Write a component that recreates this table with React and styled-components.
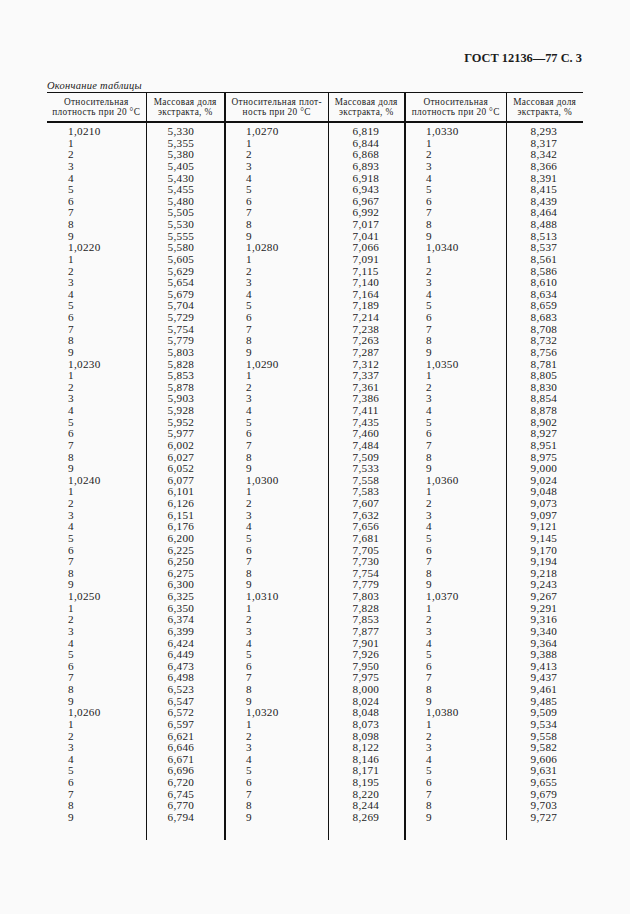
import React from 'react';
import styled, { createGlobalStyle } from 'styled-components';

const GlobalStyle = createGlobalStyle`
  html, body {
    margin: 0;
    padding: 0;
    background: #fafafa;
  }
  body {
    font-family: "Liberation Serif", "Times New Roman", serif;
    color: #1c1c1c;
  }
`;

const Page = styled.div`
  width: 630px;
  min-height: 914px;
  box-sizing: border-box;
  padding: 50px 47px 0 47px;
  background: #fafafa;
`;

const RunningTitle = styled.div`
  text-align: right;
  font-size: 12.4px;
  font-weight: 700;
  line-height: 16px;
  padding-right: 1px;
`;

const Caption = styled.div`
  margin-top: 13px;
  font-size: 10.5px;
  font-style: italic;
  line-height: 13px;
  letter-spacing: 0.25px;
`;

const Table = styled.table`
  width: 536px;
  border-collapse: collapse;
  table-layout: fixed;
`;

const HeadCell = styled.th`
  height: 28px;
  padding: 0;
  border-top: 1px solid #111;
  border-bottom: 2px solid #111;
  border-right: ${p => (p.$last ? 'none' : `${p.$thick ? 2 : 1}px solid #111`)};
  font-size: 9.3px;
  font-weight: 400;
  line-height: 10.5px;
  letter-spacing: 0.35px;
  text-align: center;
  vertical-align: middle;
`;

const BodyCell = styled.td`
  padding: 3px 0 16px ${p => p.$indent}px;
  border-right: ${p => (p.$last ? 'none' : `${p.$thick ? 2 : 1}px solid #111`)};
  vertical-align: top;
  font-size: 11.2px;
  letter-spacing: 0.3px;
`;

const Line = styled.div`
  height: 11.63px;
  line-height: 11.63px;
  white-space: nowrap;
`;

const col2 = [
  '5,330', '5,355', '5,380', '5,405', '5,430', '5,455', '5,480', '5,505', '5,530', '5,555',
  '5,580', '5,605', '5,629', '5,654', '5,679', '5,704', '5,729', '5,754', '5,779', '5,803',
  '5,828', '5,853', '5,878', '5,903', '5,928', '5,952', '5,977', '6,002', '6,027', '6,052',
  '6,077', '6,101', '6,126', '6,151', '6,176', '6,200', '6,225', '6,250', '6,275', '6,300',
  '6,325', '6,350', '6,374', '6,399', '6,424', '6,449', '6,473', '6,498', '6,523', '6,547',
  '6,572', '6,597', '6,621', '6,646', '6,671', '6,696', '6,720', '6,745', '6,770', '6,794',
];

const col4 = [
  '6,819', '6,844', '6,868', '6,893', '6,918', '6,943', '6,967', '6,992', '7,017', '7,041',
  '7,066', '7,091', '7,115', '7,140', '7,164', '7,189', '7,214', '7,238', '7,263', '7,287',
  '7,312', '7,337', '7,361', '7,386', '7,411', '7,435', '7,460', '7,484', '7,509', '7,533',
  '7,558', '7,583', '7,607', '7,632', '7,656', '7,681', '7,705', '7,730', '7,754', '7,779',
  '7,803', '7,828', '7,853', '7,877', '7,901', '7,926', '7,950', '7,975', '8,000', '8,024',
  '8,048', '8,073', '8,098', '8,122', '8,146', '8,171', '8,195', '8,220', '8,244', '8,269',
];

const col6 = [
  '8,293', '8,317', '8,342', '8,366', '8,391', '8,415', '8,439', '8,464', '8,488', '8,513',
  '8,537', '8,561', '8,586', '8,610', '8,634', '8,659', '8,683', '8,708', '8,732', '8,756',
  '8,781', '8,805', '8,830', '8,854', '8,878', '8,902', '8,927', '8,951', '8,975', '9,000',
  '9,024', '9,048', '9,073', '9,097', '9,121', '9,145', '9,170', '9,194', '9,218', '9,243',
  '9,267', '9,291', '9,316', '9,340', '9,364', '9,388', '9,413', '9,437', '9,461', '9,485',
  '9,509', '9,534', '9,558', '9,582', '9,606', '9,631', '9,655', '9,679', '9,703', '9,727',
];

// density column: full value every tenth row, otherwise only the last digit
const densities = startHundredths =>
  Array.from({ length: 60 }, (_, i) =>
    i % 10 === 0 ? `1,0${startHundredths + i / 10}0` : String(i % 10)
  );

const columns = [
  { width: 99, indent: 21, head: ['Относительная', 'плотность при 20 °С'], values: densities(21) },
  { width: 79, indent: 21, head: ['Массовая доля', 'экстракта, %'], values: col2, thick: true },
  { width: 103, indent: 20, head: ['Относительная плот-', 'ность при 20 °С'], values: densities(27) },
  { width: 77, indent: 24, head: ['Массовая доля', 'экстракта, %'], values: col4, thick: true },
  { width: 101, indent: 20, head: ['Относительная', 'плотность при 20 °С'], values: densities(33) },
  { width: 77, indent: 24, head: ['Массовая доля', 'экстракта, %'], values: col6, last: true },
];

const App = () => {
  return (
    <Page>
      <GlobalStyle />
      <RunningTitle>ГОСТ 12136—77 С. 3</RunningTitle>
      <Caption>Окончание таблицы</Caption>
      <Table>
        <colgroup>
          {columns.map((c, i) => (
            <col key={i} style={{ width: c.width }} />
          ))}
        </colgroup>
        <thead>
          <tr>
            {columns.map((c, i) => (
              <HeadCell key={i} $thick={c.thick} $last={c.last}>
                {c.head[0]}
                <br />
                {c.head[1]}
              </HeadCell>
            ))}
          </tr>
        </thead>
        <tbody>
          <tr>
            {columns.map((c, i) => (
              <BodyCell key={i} $indent={c.indent} $thick={c.thick} $last={c.last}>
                {c.values.map((v, j) => (
                  <Line key={j}>{v}</Line>
                ))}
              </BodyCell>
            ))}
          </tr>
        </tbody>
      </Table>
    </Page>
  );
};

export default App;
